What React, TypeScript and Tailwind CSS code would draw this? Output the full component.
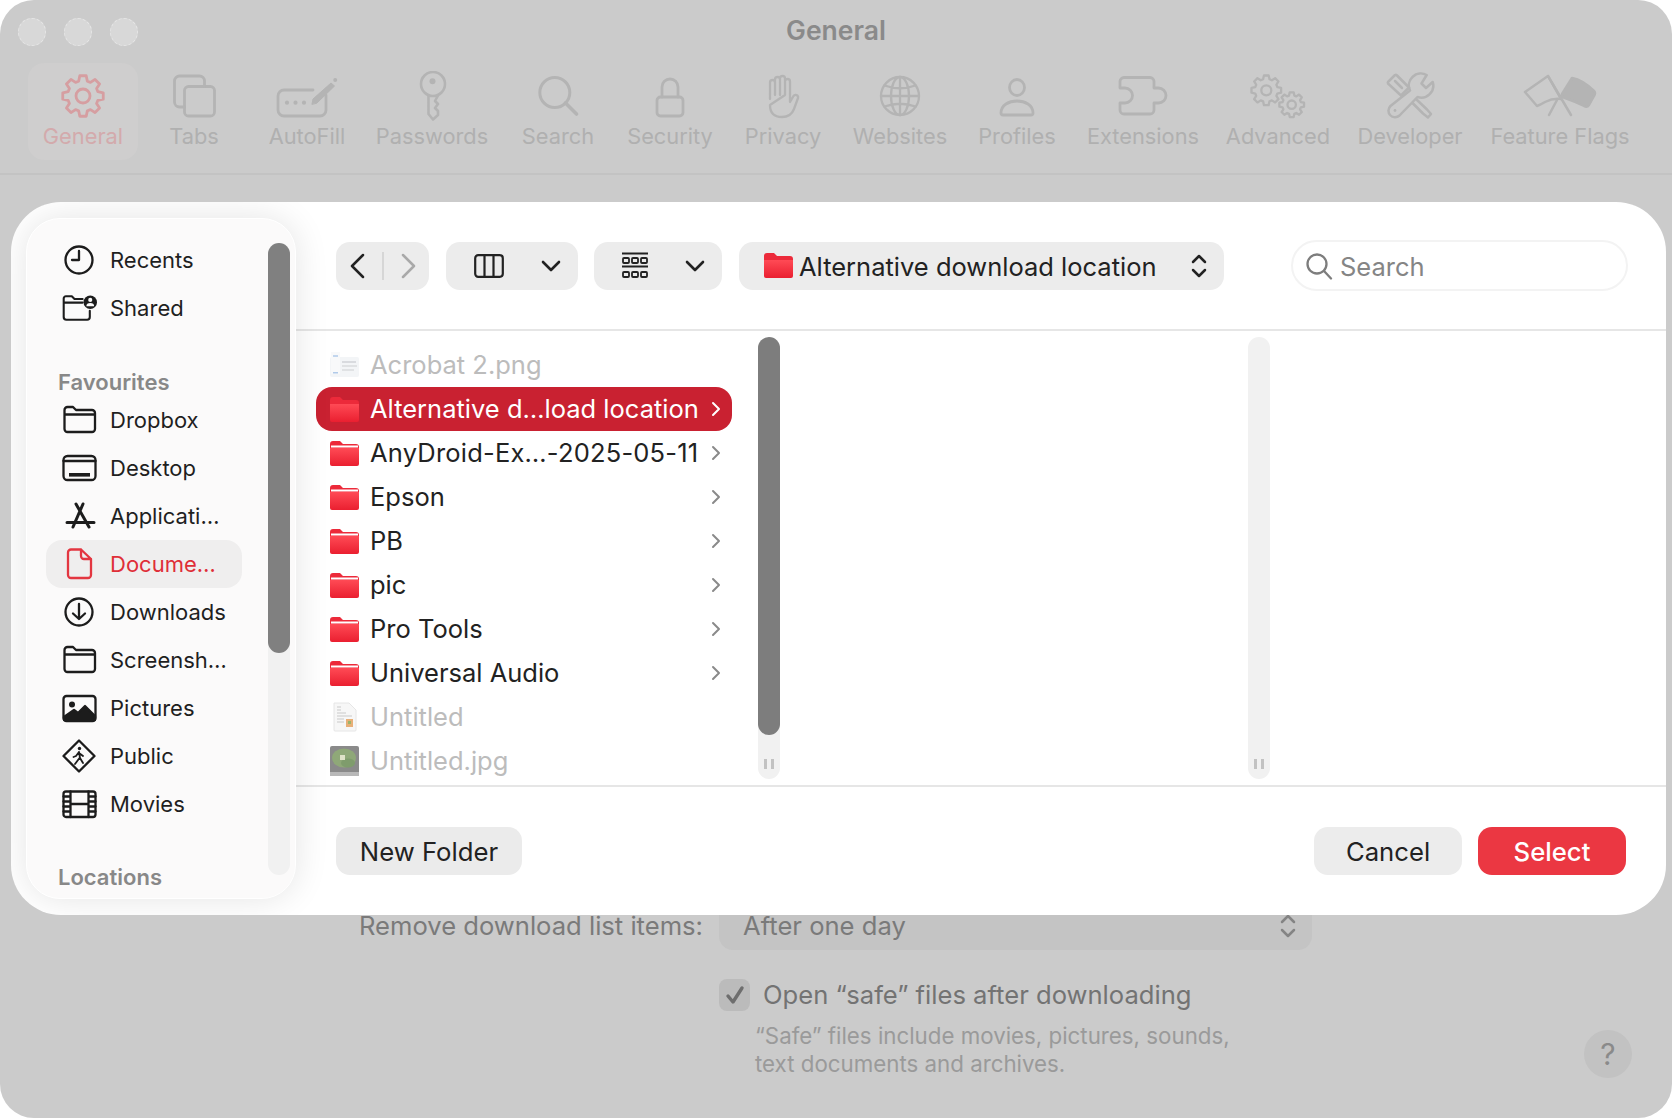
import type { ReactNode } from 'react'

function gearPath(cx: number, cy: number, ro: number, ri: number, teeth: number) {
  const step = (Math.PI * 2) / teeth
  const pts: string[] = []
  for (let i = 0; i < teeth; i++) {
    const a = i * step - Math.PI / 2
    const pt = (r: number, t: number) => `${(cx + r * Math.cos(t)).toFixed(2)} ${(cy + r * Math.sin(t)).toFixed(2)}`
    pts.push(pt(ri, a - step * 0.36), pt(ro, a - step * 0.2), pt(ro, a + step * 0.2), pt(ri, a + step * 0.36))
  }
  return 'M' + pts.join(' L') + ' Z'
}

function Ico({ w, color = '#b4b4b4', sw = 2.8, children }: { w: number; color?: string; sw?: number; children: ReactNode }) {
  return (
    <svg width={w} height={50} viewBox={`0 0 ${w} 50`} fill="none" stroke={color} strokeWidth={sw} strokeLinecap="round" strokeLinejoin="round">
      {children}
    </svg>
  )
}

const toolbar = [
  {
    label: 'General',
    width: 'w-[110px]',
    icon: (
      <Ico w={50} color="#d69ea1">
        <path d={gearPath(25, 25, 20.5, 15.5, 8)} />
        <circle cx="25" cy="25" r="7" />
      </Ico>
    ),
  },
  {
    label: 'Tabs',
    width: 'w-[112px]',
    icon: (
      <Ico w={50}>
        <rect x="15.5" y="15.5" width="30" height="29.5" rx="4" />
        <path d="M15.5 36 H10.5 a5 5 0 0 1-5-5 V10 a5 5 0 0 1 5-5 H30.5 a5 5 0 0 1 5 5 V15.5" />
      </Ico>
    ),
  },
  {
    label: 'AutoFill',
    width: 'w-[114px]',
    icon: (
      <Ico w={70}>
        <path d="M41 19 H12 a6 6 0 0 0-6 6 V39 a6 6 0 0 0 6 6 H48 a6 6 0 0 0 6-6 V24" />
        <circle cx="15" cy="31.7" r="2.1" fill="#b4b4b4" stroke="none" />
        <circle cx="23.5" cy="31.7" r="2.1" fill="#b4b4b4" stroke="none" />
        <circle cx="32" cy="31.7" r="2.1" fill="#b4b4b4" stroke="none" />
        <path d="M40 33 L41 28 L59 12 L62.5 15 L45 32 Z" fill="#b4b4b4" strokeWidth="1" />
        <circle cx="63.2" cy="9" r="2" fill="#b4b4b4" stroke="none" />
      </Ico>
    ),
  },
  {
    label: 'Passwords',
    width: 'w-[136px]',
    icon: (
      <Ico w={30} sw={2.6}>
        <circle cx="16" cy="13" r="12" />
        <circle cx="15.5" cy="10.3" r="3" fill="#b4b4b4" stroke="none" />
        <path d="M11.5 24.5 V43 L16 48.5 L21 44 V40 L18 37 L21 33 L18 30 L21 24.5" />
      </Ico>
    ),
  },
  {
    label: 'Search',
    width: 'w-[116px]',
    icon: (
      <Ico w={50} sw={3}>
        <circle cx="21.8" cy="21.5" r="15" />
        <path d="M32.5 32 L43.5 43" strokeWidth="3.6" />
      </Ico>
    ),
  },
  {
    label: 'Security',
    width: 'w-[108px]',
    icon: (
      <Ico w={40}>
        <rect x="7" y="26" width="26" height="19" rx="3.5" />
        <path d="M12 26 V16 a8 8 0 0 1 16 0 V26" />
      </Ico>
    ),
  },
  {
    label: 'Privacy',
    width: 'w-[118px]',
    icon: (
      <Ico w={46} sw={2.3}>
        <path d="M10 28 V11.5 a2.5 2.5 0 0 1 5 0 V24 M15 24 V8.5 a2.5 2.5 0 0 1 5 0 V24 M20 24 V7.5 a2.5 2.5 0 0 1 5 0 V24 M25 24 V10.5 a2.5 2.5 0 0 1 5 0 V31 L33.5 25 a2.5 2.5 0 0 1 4.5 2 L34 38 Q31 46 22 46 Q10 46 10 34 Z" />
      </Ico>
    ),
  },
  {
    label: 'Websites',
    width: 'w-[116px]',
    icon: (
      <Ico w={50} sw={2.3}>
        <circle cx="25" cy="25" r="19" />
        <ellipse cx="25" cy="25" rx="9" ry="19" />
        <path d="M25 6 V44 M6 25 H44 M9.5 14.5 Q25 20 40.5 14.5 M9.5 35.5 Q25 30 40.5 35.5" />
      </Ico>
    ),
  },
  {
    label: 'Profiles',
    width: 'w-[118px]',
    icon: (
      <Ico w={40}>
        <ellipse cx="20" cy="16.5" rx="7.5" ry="8" />
        <path d="M6 44 H34 a2 2 0 0 0 2-2 C36 34 28 30 20 30 C12 30 4 34 4 42 a2 2 0 0 0 2 2 Z" />
      </Ico>
    ),
  },
  {
    label: 'Extensions',
    width: 'w-[134px]',
    icon: (
      <Ico w={60}>
        <path d="M11 6.5 H37 a4 4 0 0 1 4 4 V17 H45.5 a7.5 7.5 0 0 1 0 15 H41 V39 a4 4 0 0 1-4 4 H11 a4 4 0 0 1-4-4 V32 H12 a7.5 7.5 0 0 0 0-15 H7 V10.5 a4 4 0 0 1 4-4 Z" />
      </Ico>
    ),
  },
  {
    label: 'Advanced',
    width: 'w-[136px]',
    icon: (
      <Ico w={60} sw={2.3}>
        <path d={gearPath(18.3, 19.3, 15, 11.5, 8)} />
        <circle cx="18.3" cy="19.3" r="5" />
        <path d={gearPath(43.7, 33.7, 12.5, 9.5, 8)} />
        <circle cx="43.7" cy="33.7" r="4.2" />
      </Ico>
    ),
  },
  {
    label: 'Developer',
    width: 'w-[128px]',
    icon: (
      <Ico w={50} sw={2.5}>
        <path d="M41.7 4 A12 12 0 0 0 25 19.5 L5.5 35 A6.5 6.5 0 0 0 14.5 44.5 L32.5 26 A12 12 0 0 0 47.7 11 L41 17 L36.5 12.5 Z" />
        <circle cx="10" cy="39.5" r="1.4" fill="#b4b4b4" stroke="none" />
        <path d="M3 11 L10 4 Q11 3.5 12 4.5 L24 16.5 L16 24.5 L3 12.5 Q2.5 11.5 3 11 Z M10 10 L17 17" />
        <path d="M31 28 L42 38.5 L46 43 L43 46.5 L38 42.5 L27.5 32" />
      </Ico>
    ),
  },
  {
    label: 'Feature Flags',
    width: 'w-[172px]',
    icon: (
      <Ico w={80} sw={2.5}>
        <path d="M5 21 L28 5 L41 28 Q33 27 25 31 Q20 34 17 35 Z" />
        <path d="M28 5 L51 44 M37 29 L29 44" />
        <path d="M42 23 L52 7 Q63 9 74 20 Q76 22 74 25 L69 34 Q67 37 64 35 Q54 30 45 27 Q41 26 42 23 Z" fill="#b4b4b4" />
      </Ico>
    ),
  },
]

function Side({ w = 36, color = '#1c1c1c', children }: { w?: number; color?: string; children: ReactNode }) {
  return (
    <svg width={w} height={36} viewBox={`0 0 ${w} 36`} fill="none" stroke={color} strokeWidth={2.3} strokeLinecap="round" strokeLinejoin="round">
      {children}
    </svg>
  )
}

const folderOutline = (
  <Side>
    <path d="M3.5 8 a3 3 0 0 1 3-3 H12 l3 3 H31 a3 3 0 0 1 3 3 V27 a3 3 0 0 1-3 3 H6.5 a3 3 0 0 1-3-3 Z M3.5 12.5 H34" />
  </Side>
)

const topItems = [
  {
    label: 'Recents',
    icon: (
      <Side>
        <circle cx="18" cy="18" r="13.5" />
        <path d="M18 9 V18 H11" />
      </Side>
    ),
  },
  {
    label: 'Shared',
    icon: (
      <Side w={40}>
        <path d="M3 12 V7.5 a2.5 2.5 0 0 1 2.5-2.5 H12 L15 8 H24 M3 12 H24 M3 12 V28 a3 3 0 0 0 3 3 H29 a3 3 0 0 0 3-3 V21" />
        <circle cx="32.5" cy="11.5" r="7.5" fill="#1c1c1c" stroke="none" />
        <circle cx="32.5" cy="9" r="2.3" fill="#fbfafa" stroke="none" />
        <path d="M28.2 16 a4.3 3.5 0 0 1 8.6 0 Z" fill="#fbfafa" stroke="none" />
      </Side>
    ),
  },
]

const favourites = [
  { label: 'Dropbox', icon: folderOutline },
  {
    label: 'Desktop',
    icon: (
      <Side>
        <rect x="2.5" y="6" width="32" height="24" rx="4" />
        <path d="M2.5 11 H34.5" />
        <rect x="8" y="23" width="21" height="3.6" fill="#1c1c1c" stroke="none" />
      </Side>
    ),
  },
  {
    label: 'Applicati…',
    icon: (
      <Side>
        <path d="M22 6 L12 29 M15 6 L28 29 M6 24.5 H33" strokeWidth="3" />
      </Side>
    ),
  },
  {
    label: 'Docume…',
    active: true,
    icon: (
      <Side color="#e33640">
        <path d="M10 3.5 H20 L30 13 V29 a3 3 0 0 1-3 3 H10 a3 3 0 0 1-3-3 V6.5 a3 3 0 0 1 3-3 Z M20 3.5 V10 a3 3 0 0 0 3 3 H30" />
      </Side>
    ),
  },
  {
    label: 'Downloads',
    icon: (
      <Side>
        <circle cx="18" cy="18" r="13.5" />
        <path d="M18 10 V25 M12 19.5 L18 25 L24 19.5" />
      </Side>
    ),
  },
  { label: 'Screensh…', icon: folderOutline },
  {
    label: 'Pictures',
    icon: (
      <Side>
        <rect x="2.5" y="6" width="32" height="25" rx="3" />
        <circle cx="11" cy="14.5" r="3" fill="#1c1c1c" stroke="none" />
        <path d="M3 30 V27 L13 20 L17 23 L24 16 L34 26 V30 Z" fill="#1c1c1c" />
      </Side>
    ),
  },
  {
    label: 'Public',
    icon: (
      <Side>
        <path d="M18 2.5 L33.5 18 L18 33.5 L2.5 18 Z" />
        <circle cx="18.5" cy="10.5" r="1.7" fill="#1c1c1c" stroke="none" />
        <path d="M18 14 L15 18 L12.5 19 M18 14 L19 20 L22 25 M18.5 20 L14 26 M18 15 L22 18" strokeWidth="1.8" />
      </Side>
    ),
  },
  {
    label: 'Movies',
    icon: (
      <Side>
        <rect x="2.5" y="5.5" width="32" height="25.5" rx="2.5" />
        <path d="M9.5 5.5 V31 M27.5 5.5 V31 M9.5 18 H27.5 M2.5 10.5 H9.5 M2.5 15.5 H9.5 M2.5 20.5 H9.5 M2.5 25.5 H9.5 M27.5 10.5 H34.5 M27.5 15.5 H34.5 M27.5 20.5 H34.5 M27.5 25.5 H34.5" />
      </Side>
    ),
  },
]

function RedFolder({ line = true }: { line?: boolean }) {
  return (
    <svg width="29" height="27" viewBox="0 0 29 27">
      <defs>
        <linearGradient id="redFolderGrad" x1="0" y1="0" x2="0" y2="1">
          <stop offset="0" stopColor="#ff4a55" />
          <stop offset="1" stopColor="#ea1f30" />
        </linearGradient>
      </defs>
      <path d="M0 4 a3 3 0 0 1 3-3 H10 L13 4 H26 a3 3 0 0 1 3 3 V9 H0 Z" fill="#ec2a3a" />
      {line && <rect x="1" y="5.5" width="27" height="2" fill="#ffffff" />}
      <path d="M0 8 H29 V24 a2 2 0 0 1-2 2 H2 a2 2 0 0 1-2-2 Z" fill="url(#redFolderGrad)" />
    </svg>
  )
}

function AcrobatThumb() {
  return (
    <svg width="29" height="27" viewBox="0 0 29 27" className="opacity-70">
      <rect x="0" y="5" width="29" height="20" rx="2" fill="#eef1f5" />
      <rect x="1" y="0" width="9" height="22" fill="#f6f7f9" />
      <rect x="3" y="3" width="5" height="2" fill="#a9c6e8" />
      <rect x="12" y="9" width="14" height="2" fill="#c9ccd2" />
      <rect x="12" y="13" width="15" height="2" fill="#d4d6da" />
      <rect x="12" y="17" width="12" height="2" fill="#d4d6da" />
      <rect x="3" y="20" width="5" height="1.5" fill="#8fb4e0" />
    </svg>
  )
}

function DocThumb() {
  return (
    <svg width="29" height="30" viewBox="0 0 29 30">
      <path d="M4 1 H19 L26 8 V28 a1 1 0 0 1-1 1 H5 a1 1 0 0 1-1-1 Z" fill="#f7f7f7" stroke="#e6e6e6" />
      <path d="M7 5 H11 M7 8 H11 M7 11 H16 M7 14 H22 M7 17 H14 M7 20 H14" stroke="#c9c9c9" strokeWidth="1.2" />
      <rect x="16" y="17" width="7" height="8" fill="#e8b078" />
      <rect x="18" y="19" width="3" height="3" fill="#9bb56c" />
    </svg>
  )
}

function JpgThumb() {
  return (
    <svg width="29" height="30" viewBox="0 0 29 30">
      <rect x="0" y="0" width="29" height="30" rx="2" fill="#8a8a8a" />
      <rect x="0" y="26" width="29" height="4" fill="#b8b8b8" />
      <ellipse cx="14" cy="12" rx="12" ry="9.5" fill="#8fa878" />
      <ellipse cx="18" cy="17" rx="7" ry="4.5" fill="#7f9c6c" />
      <rect x="10" y="9" width="5" height="5" fill="#dfe2c8" />
    </svg>
  )
}

const files: { name: string; kind: 'folder' | 'acrobat' | 'doc' | 'jpg'; selected?: boolean; wide?: boolean }[] = [
  { name: 'Acrobat 2.png', kind: 'acrobat' },
  { name: 'Alternative d…load location', kind: 'folder', selected: true },
  { name: 'AnyDroid-Ex…-2025-05-11', kind: 'folder', wide: true },
  { name: 'Epson', kind: 'folder' },
  { name: 'PB', kind: 'folder' },
  { name: 'pic', kind: 'folder' },
  { name: 'Pro Tools', kind: 'folder' },
  { name: 'Universal Audio', kind: 'folder' },
  { name: 'Untitled', kind: 'doc' },
  { name: 'Untitled.jpg', kind: 'jpg' },
]

function SideRow({ label, icon, active }: { label: string; icon: ReactNode; active?: boolean }) {
  return (
    <div className={active ? 'ml-[19px] flex h-12 w-[196px] items-center gap-[13px] rounded-2xl bg-[#efeeee] pl-[15px] text-[#df2e38]' : 'ml-[19px] flex h-12 w-[196px] items-center gap-[13px] pl-[15px] text-[#1f1f1f]'}>
      <div className="flex w-9 shrink-0 justify-start">{icon}</div>
      <span className="text-[22px] leading-none">{label}</span>
    </div>
  )
}

function Grip() {
  return (
    <div className="absolute bottom-[10px] left-[6px] flex gap-[4px]">
      <div className="h-[10px] w-[3px] bg-[#c2c2c2]" />
      <div className="h-[10px] w-[3px] bg-[#c2c2c2]" />
    </div>
  )
}

function SmallChevron({ stroke }: { stroke: string }) {
  return (
    <svg width="20" height="12" viewBox="0 0 20 12" fill="none" stroke={stroke} strokeWidth="2.6" strokeLinecap="round" strokeLinejoin="round">
      <path d="M2 2 L10 10 L18 2" />
    </svg>
  )
}

function Stepper({ stroke }: { stroke: string }) {
  return (
    <svg width="18" height="26" viewBox="0 0 18 26" fill="none" stroke={stroke} strokeWidth="2.5" strokeLinecap="round" strokeLinejoin="round">
      <path d="M3 9 L9 3 L15 9 M3 17 L9 23 L15 17" />
    </svg>
  )
}

export default function App() {
  return (
    <div className="font-['Inter',sans-serif] h-[1118px] w-[1672px] overflow-hidden bg-white">
      {/* Settings window behind the sheet */}
      <div className="relative h-[1118px] w-[1672px] overflow-hidden rounded-[34px] bg-[#cbcbcb]">
        <div className="relative flex h-[63px] items-start gap-[18px] pt-[18px] pl-[18px]">
          <div className="h-7 w-7 rounded-full border border-dashed border-[#e6e6e6] bg-[#d8d8d8]" />
          <div className="h-7 w-7 rounded-full border border-dashed border-[#e6e6e6] bg-[#d8d8d8]" />
          <div className="h-7 w-7 rounded-full border border-dashed border-[#e6e6e6] bg-[#d8d8d8]" />
          <div className="absolute top-[14px] left-0 w-full text-center text-[26.5px] leading-8 font-semibold text-[#8a8a8a]">General</div>
        </div>

        <div className="flex h-[112px] items-start border-b-2 border-[#c3c3c3] pl-[28px]">
          {toolbar.map((item, i) => (
            <div key={item.label} className={`${item.width} flex h-[97px] flex-col items-center pt-2 ${i === 0 ? 'rounded-2xl bg-[#cfcece] text-[#d3aaac]' : 'text-[#b0b0b0]'}`}>
              <div className="flex h-[50px] items-center justify-center">{item.icon}</div>
              <div className="mt-px text-[21.8px] leading-7 whitespace-nowrap">{item.label}</div>
            </div>
          ))}
        </div>

        <div className="flex pt-[727px] pl-[359px]">
          <div className="w-[343px] text-[25.6px] leading-[48px] whitespace-nowrap text-[#7a7a7a]">Remove download list items:</div>
          <div className="ml-[17px] flex h-12 w-[593px] items-center justify-between rounded-[14px] bg-[#c4c4c4] pr-[15px] pl-6 text-[25.6px] text-[#7a7a7a]">
            <span>After one day</span>
            <Stepper stroke="#848484" />
          </div>
        </div>

        <div className="mt-[26px] ml-[719px] flex items-center">
          <div className="flex h-8 w-[31px] items-center justify-center rounded-lg bg-[#bbbbbb]">
            <svg width="22" height="22" viewBox="0 0 22 22" fill="none" stroke="#6e6e6e" strokeWidth="3.4" strokeLinecap="round" strokeLinejoin="round">
              <path d="M4 12 L9 18 L18 4" />
            </svg>
          </div>
          <span className="ml-[13px] text-[25.6px] text-[#737373]">Open “safe” files after downloading</span>
        </div>

        <div className="mt-[8px] ml-[755px] text-[22.3px] leading-[28px] text-[#9a9a9a]">
          “Safe” files include movies, pictures, sounds,
          <br />
          text documents and archives.
        </div>

        <div className="absolute top-[1030px] left-[1584px] flex h-12 w-12 items-center justify-center rounded-full bg-[#c2c2c2] text-[30px] text-[#8a8a8a]">?</div>

        {/* Open panel sheet */}
        <div className="absolute top-[202px] left-[11px] flex h-[713px] w-[1655px] overflow-hidden rounded-[50px] bg-white">
          <div className="relative my-4 ml-[15px] h-[681px] w-[270px] shrink-0 overflow-hidden rounded-[34px] border border-white bg-[#fbfafa] pt-[17px] shadow-[0_0_34px_rgba(0,0,0,0.11)]">
            {topItems.map(item => (
              <SideRow key={item.label} label={item.label} icon={item.icon} />
            ))}
            <div className="mt-9 pl-[31px] text-[22px] leading-7 font-semibold text-[#888888]">Favourites</div>
            {favourites.map(item => (
              <SideRow key={item.label} label={item.label} icon={item.icon} active={item.active} />
            ))}
            <div className="mt-[35px] pl-[31px] text-[22px] leading-7 font-semibold text-[#888888]">Locations</div>
            <div className="absolute top-[24px] left-[241px] h-[632px] w-[22px] rounded-full bg-[#f1f1f1]">
              <div className="h-[410px] w-[22px] rounded-full bg-[#808080]" />
            </div>
          </div>

          <div className="flex min-w-0 flex-1 flex-col">
            <div className="flex h-[127px] shrink-0 items-center gap-4 pl-[40px]">
              <div className="flex h-12 w-[93px] items-center rounded-[14px] bg-[#ececec]">
                <svg width="46" height="26" viewBox="0 0 46 26" fill="none" stroke="#222222" strokeWidth="2.5" strokeLinecap="round" strokeLinejoin="round">
                  <path d="M27 2 L16 13 L27 24" />
                </svg>
                <div className="h-7 w-[2px] bg-[#d6d6d6]" />
                <svg width="45" height="26" viewBox="0 0 45 26" fill="none" stroke="#a9a9a9" strokeWidth="2.5" strokeLinecap="round" strokeLinejoin="round">
                  <path d="M19 2 L30 13 L19 24" />
                </svg>
              </div>
              <div className="ml-px flex h-12 w-[132px] items-center justify-between rounded-[14px] bg-[#ececec] pr-[17px] pl-[28px]">
                <svg width="30" height="24" viewBox="0 0 30 24" fill="none" stroke="#222222" strokeWidth="2.2">
                  <rect x="1.2" y="1.2" width="27.6" height="21.6" rx="3" />
                  <path d="M10.5 1.2 V22.8 M19.5 1.2 V22.8" />
                </svg>
                <SmallChevron stroke="#222222" />
              </div>
              <div className="flex h-12 w-[128px] items-center justify-between rounded-[14px] bg-[#ececec] pr-[17px] pl-[27px]">
                <svg width="28" height="28" viewBox="0 0 28 28" fill="none" stroke="#222222" strokeWidth="1.8">
                  <path d="M1 1.5 H27 M1 14.5 H27" strokeWidth="2" />
                  <rect x="2" y="6" width="6" height="5" rx="1" />
                  <rect x="11" y="6" width="6" height="5" rx="1" />
                  <rect x="20" y="6" width="6" height="5" rx="1" />
                  <rect x="2" y="20" width="6" height="5" rx="1" />
                  <rect x="11" y="20" width="6" height="5" rx="1" />
                  <rect x="20" y="20" width="6" height="5" rx="1" />
                </svg>
                <SmallChevron stroke="#222222" />
              </div>
              <div className="ml-px flex h-12 w-[485px] items-center rounded-[14px] bg-[#ececec] pr-[16px] pl-[25px]">
                <RedFolder line={false} />
                <span className="ml-[6px] flex-1 pt-[3px] text-[25.5px] whitespace-nowrap text-[#222222]">Alternative download location</span>
                <Stepper stroke="#222222" />
              </div>
              <div className="ml-[51px] flex h-[51px] w-[337px] items-center rounded-full border-2 border-[#f3f3f3] pl-[12px] text-[25.5px] text-[#858585]">
                <svg width="28" height="28" viewBox="0 0 28 28" fill="none" stroke="#7d7d7d" strokeWidth="2.3" strokeLinecap="round">
                  <circle cx="12" cy="12" r="9.5" />
                  <path d="M19 19 L26 26.5" />
                </svg>
                <span className="ml-[7px] pt-[3px]">Search</span>
              </div>
            </div>

            <div className="flex h-[458px] shrink-0 items-start border-y-2 border-[#e6e6e6]">
              <div className="mt-[12px] ml-5 w-[416px] shrink-0">
                {files.map(file => (
                  <div key={file.name} className={`flex h-11 items-center rounded-2xl pr-[11px] pl-[14px] ${file.selected ? 'bg-[#c92131] text-white' : file.kind === 'folder' ? 'text-[#222222]' : 'text-[#bcbcbc]'}`}>
                    <div className="flex w-[29px] shrink-0 items-center justify-center">
                      {file.kind === 'folder' && <RedFolder line={!file.selected} />}
                      {file.kind === 'acrobat' && <AcrobatThumb />}
                      {file.kind === 'doc' && <DocThumb />}
                      {file.kind === 'jpg' && <JpgThumb />}
                    </div>
                    <span className={`ml-[11px] flex-1 pt-px text-[25.5px] whitespace-nowrap ${file.wide ? 'tracking-[0.2px]' : ''}`}>{file.name}</span>
                    {file.kind === 'folder' && (
                      <svg width="10" height="16" viewBox="0 0 10 16" fill="none" stroke={file.selected ? '#ffffff' : '#8a8a8a'} strokeWidth="2" strokeLinecap="round" strokeLinejoin="round">
                        <path d="M2 2 L8 8 L2 14" />
                      </svg>
                    )}
                  </div>
                ))}
              </div>
              <div className="relative mt-[6px] ml-[26px] h-[442px] w-[22px] shrink-0 rounded-full bg-[#f1f1f1]">
                <div className="h-[398px] w-[22px] rounded-full bg-[#7d7d7d]" />
                <Grip />
              </div>
              <div className="relative mt-[6px] ml-[468px] h-[442px] w-[22px] shrink-0 rounded-full bg-[#f1f1f1]">
                <Grip />
              </div>
            </div>

            <div className="flex flex-1 items-start justify-between pt-[40px] pr-[40px] pl-[40px]">
              <button className="h-12 w-[186px] rounded-[14px] bg-[#ebebeb] pt-[2px] text-[25.7px] text-[#222222]">New Folder</button>
              <div className="flex gap-4">
                <button className="h-12 w-[148px] rounded-[14px] bg-[#ececec] pt-[2px] text-[25.7px] text-[#222222]">Cancel</button>
                <button className="h-12 w-[148px] rounded-[14px] bg-[#eb3742] pt-[2px] text-[25.7px] font-medium text-white">Select</button>
              </div>
            </div>
          </div>
        </div>
      </div>
    </div>
  )
}
